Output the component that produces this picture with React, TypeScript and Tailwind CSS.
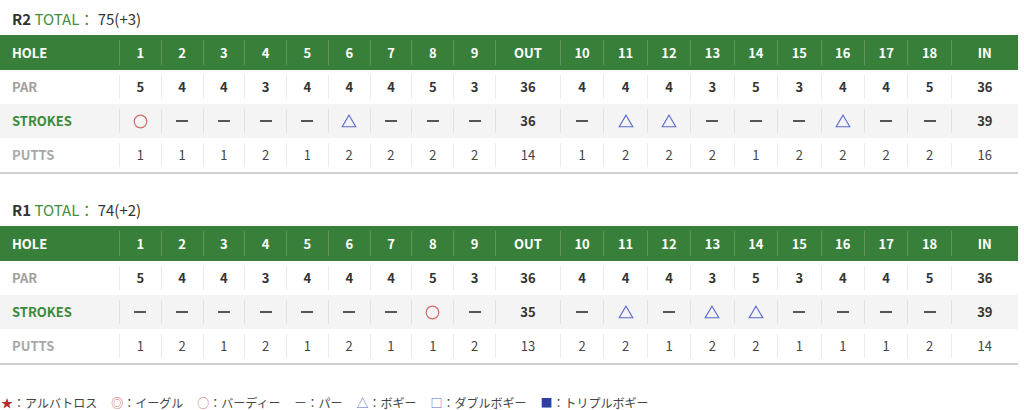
import React from "react";

type Sym = "o" | "t" | "d";

const PAR = ["5", "4", "4", "3", "4", "4", "4", "5", "3", "36", "4", "4", "4", "3", "5", "3", "4", "4", "5", "36"];
const HOLES = ["1", "2", "3", "4", "5", "6", "7", "8", "9", "OUT", "10", "11", "12", "13", "14", "15", "16", "17", "18", "IN"];

const rounds: { name: string; total: string; strokes: (Sym | string)[]; putts: string[] }[] = [
  {
    name: "R2",
    total: "75(+3)",
    strokes: ["o", "d", "d", "d", "d", "t", "d", "d", "d", "36", "d", "t", "t", "d", "d", "d", "t", "d", "d", "39"],
    putts: ["1", "1", "1", "2", "1", "2", "2", "2", "2", "14", "1", "2", "2", "2", "1", "2", "2", "2", "2", "16"],
  },
  {
    name: "R1",
    total: "74(+2)",
    strokes: ["d", "d", "d", "d", "d", "d", "d", "o", "d", "35", "d", "t", "d", "t", "t", "d", "d", "d", "d", "39"],
    putts: ["1", "2", "1", "2", "1", "2", "1", "1", "2", "13", "2", "2", "1", "2", "2", "1", "1", "1", "2", "14"],
  },
];

const grid =
  "grid grid-cols-[119px_repeat(9,41.78px)_65px_repeat(9,43.44px)_67px]";

function Symbol({ s }: { s: Sym | string }) {
  if (s === "o")
    return (
      <svg width="15" height="15" viewBox="0 0 15 15">
        <circle cx="7.5" cy="7.5" r="6.3" fill="none" stroke="#d46a6a" strokeWidth="1.2" />
      </svg>
    );
  if (s === "t")
    return (
      <svg width="16" height="14" viewBox="0 0 16 14">
        <path d="M8 1.2 L14.8 12.8 L1.2 12.8 Z" fill="none" stroke="#5b69d0" strokeWidth="1.1" strokeLinejoin="miter" />
      </svg>
    );
  if (s === "d") return <div className="w-[12px] h-[1.5px] bg-[#555]" />;
  return <span className="font-bold text-[#333]">{s}</span>;
}

function Row({
  label,
  labelClass,
  bg,
  sep,
  h,
  children,
}: {
  label: string;
  labelClass: string;
  bg: string;
  sep: string;
  h: string;
  children: React.ReactNode[];
}) {
  return (
    <div className={`${grid} ${bg} ${h}`}>
      <div className={`flex items-center pl-[12px] font-bold text-[13px] ${labelClass}`}>{label}</div>
      {children.map((c, i) => (
        <div key={i} className="py-[5px]">
          <div className={`h-full border-l ${sep} flex items-center justify-center text-[13px]`}>{c}</div>
        </div>
      ))}
    </div>
  );
}

function Card({ r }: { r: (typeof rounds)[number] }) {
  return (
    <div>
      <div className="h-[35px] pl-[12px] pt-[9px] text-[15px] leading-[20px] text-[#333]">
        <span className="font-bold">{r.name}</span>
        <span className="text-[#3f8f3f]"> TOTAL：</span>
        <span> {r.total}</span>
      </div>
      <div className="border-b-2 border-[#d0d0d0] w-[1018px]">
        <Row label="HOLE" labelClass="text-white" bg="bg-[#38803a]" sep="border-[#5e9a5f]" h="h-[35px]">
          {HOLES.map((x) => (
            <span key={x} className="text-white font-bold">{x}</span>
          ))}
        </Row>
        <Row label="PAR" labelClass="text-[#a0a0a0]" bg="bg-white" sep="border-[#ebebeb]" h="h-[34px]">
          {PAR.map((x, i) => (
            <span key={i} className="font-bold text-[#333]">{x}</span>
          ))}
        </Row>
        <Row label="STROKES" labelClass="text-[#3a8a3c]" bg="bg-[#f4f4f4]" sep="border-[#e2e2e2]" h="h-[34px]">
          {r.strokes.map((x, i) => (
            <Symbol key={i} s={x} />
          ))}
        </Row>
        <Row label="PUTTS" labelClass="text-[#a8a8a8]" bg="bg-white" sep="border-[#ebebeb]" h="h-[34px]">
          {r.putts.map((x, i) => (
            <span key={i} className={i === 9 || i === 19 ? "text-[#444]" : "text-[#444]"}>{x}</span>
          ))}
        </Row>
      </div>
    </div>
  );
}

export default function App() {
  return (
    <div
      className="w-[1024px] h-[410px] bg-white overflow-hidden"
      style={{ fontFamily: '"Noto Sans CJK JP", "Noto Sans", sans-serif' }}
    >
      <div className="flex flex-col gap-[17px]">
        {rounds.map((r) => (
          <Card key={r.name} r={r} />
        ))}
      </div>
      <div className="mt-[29px] flex items-center text-[12px] leading-[18px] text-[#444] pl-[1px]">
        <span className="text-[#b02a2a]">★</span>
        <span>：アルバトロス</span>
        <span className="ml-[14px] text-[#d46a6a]">◎</span>
        <span>：イーグル</span>
        <span className="ml-[14px] text-[#d46a6a]">○</span>
        <span>：バーディー</span>
        <span className="ml-[14px] text-[#555]">ー</span>
        <span>：パー</span>
        <span className="ml-[14px] text-[#5b69d0]">△</span>
        <span>：ボギー</span>
        <span className="ml-[14px] text-[#5b69d0]">□</span>
        <span>：ダブルボギー</span>
        <span className="ml-[14px] text-[#2f3ea0]">■</span>
        <span>：トリプルボギー</span>
      </div>
    </div>
  );
}
